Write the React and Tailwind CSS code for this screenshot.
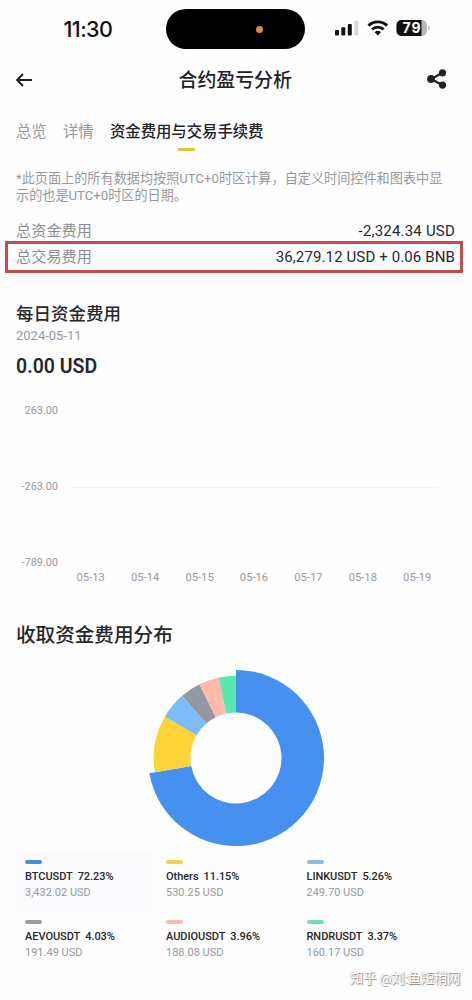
import React from "react";

const slices = [
	{ name: "BTCUSDT", pct: 72.23, value: "3,432.02 USD", color: "#4690f0", bar: "bg-[#4b8cd6]" },
	{ name: "Others", pct: 11.15, value: "530.25 USD", color: "#fdd438", bar: "bg-[#ecd24e]" },
	{ name: "LINKUSDT", pct: 5.26, value: "249.70 USD", color: "#7dbcf9", bar: "bg-[#8fb9e2]" },
	{ name: "AEVOUSDT", pct: 4.03, value: "191.49 USD", color: "#9299a3", bar: "bg-[#9b9da0]" },
	{ name: "AUDIOUSDT", pct: 3.96, value: "188.08 USD", color: "#fdbbab", bar: "bg-[#efbdb1]" },
	{ name: "RNDRUSDT", pct: 3.37, value: "160.17 USD", color: "#56e9b0", bar: "bg-[#74dcb4]" },
];

const days = ["05-13", "05-14", "05-15", "05-16", "05-17", "05-18", "05-19"];

function slicePath(start, end, outer, inner) {
	const point = (t, r) => {
		const a = t * 2 * Math.PI;
		return `${(88 + r * Math.sin(a)).toFixed(2)} ${(88 - r * Math.cos(a)).toFixed(2)}`;
	};
	const large = end - start > 0.5 ? 1 : 0;
	return `M${point(start, outer)}A${outer} ${outer} 0 ${large} 1 ${point(end, outer)}L${point(end, inner)}A${inner} ${inner} 0 ${large} 0 ${point(start, inner)}Z`;
}

function Donut() {
	let total = 0;
	return (
		<svg width="176" height="176" viewBox="0 0 176 176">
			{slices.map((s, i) => {
				const start = total;
				total += s.pct / 100;
				// The biggest slice sticks out a little
				return <path key={s.name} d={slicePath(start, Math.min(total, 1), i === 0 ? 88 : 82.3, 45.5)} fill={s.color} />;
			})}
		</svg>
	);
}

function StatusBar() {
	return (
		<div className="h-[58px] flex items-start">
			<div className="w-[166px] pl-[63.5px] pt-[15px] text-[21.5px] leading-7 font-medium font-['Inter',sans-serif] tracking-[-0.6px] text-[#111]">11:30</div>
			<div className="mt-[9px] w-[139px] h-10 rounded-full bg-black flex items-center pl-[90px]">
				<span className="size-[7px] rounded-full bg-[#d98f42]" />
			</div>
			<svg className="ml-[29px] mt-[18px]" width="100" height="20" viewBox="0 0 100 20">
				<g fill="#111">
					<rect x="1" y="12" width="4" height="5.5" rx="1" />
					<rect x="7.3" y="9.3" width="4" height="8.2" rx="1" />
					<rect x="13.8" y="6" width="4" height="11.5" rx="1" />
				</g>
				<rect x="20.3" y="2.7" width="4" height="14.8" rx="1" fill="#d8d8d8" />
				<g fill="none" stroke="#111" strokeWidth="2.9">
					<path d="M34.5 7.6a13.4 13.4 0 0 1 18.6 0" />
					<path d="M38 11.4a8.4 8.4 0 0 1 11.6 0" />
				</g>
				<path d="M40.6 14.2a4.7 4.7 0 0 1 6.4 0L43.8 17.6Z" fill="#111" />
				<rect x="62.5" y="2" width="30.5" height="16" rx="5" fill="#b8b8b8" />
				<path d="M67.5 2H87.5V18H67.5a5 5 0 0 1-5-5V7a5 5 0 0 1 5-5Z" fill="#111" />
				<path d="M94.3 7.3q2.5 2.7 0 5.4Z" fill="#aaa" />
				<text x="68.5" y="15.3" fontSize="14" fontWeight="700" fontFamily="Inter, sans-serif" fill="#fff" textLength="18">79</text>
			</svg>
		</div>
	);
}

function Header() {
	return (
		<div className="h-[44px] px-4 flex items-center text-[#202226]">
			<svg width="20" height="16" viewBox="0 0 20 16" fill="none" stroke="currentColor" strokeWidth="2">
				<path d="M16 8H1.5M7 2L1.2 8 7 14" />
			</svg>
			<h1 className="ml-[142.5px] mt-[2px] text-[18.9px] font-medium">合约盈亏分析</h1>
			<svg className="ml-auto mr-[9px] mb-0.5" width="20" height="20" viewBox="0 0 20 20" fill="currentColor">
				<path d="M15.3 3.8L4.5 10l10.8 6.2" fill="none" stroke="currentColor" strokeWidth="2.2" />
				<circle cx="15.5" cy="3.8" r="3.6" />
				<circle cx="4" cy="10" r="3.9" />
				<circle cx="15.5" cy="16.1" r="3.6" />
			</svg>
		</div>
	);
}

export default function App() {
	return (
		<div className="w-[472px] h-[1000px] overflow-hidden bg-[#fefefe] font-['Roboto','Noto_Sans_CJK_SC',sans-serif] text-[#26282c]">
			<StatusBar />
			<Header />

			{/* Tabs */}
			<div className="h-[66px] pt-[19px] pl-4 flex text-[15.35px] leading-[22px] text-[#97999d]">
				<span className="w-[47px]">总览</span>
				<span className="w-[47px]">详情</span>
				<div className="flex flex-col items-center text-[#202226]">
					<span className="font-medium">资金费用与交易手续费</span>
					<span className="mt-[5px] w-[17px] h-[3px] rounded-[1px] bg-[#e5c33c]" />
				</div>
			</div>

			<p className="h-[50px] pl-4 pt-0.5 text-[13.15px] leading-[17px] text-[#97999d] whitespace-nowrap">
				*此页面上的所有数据均按照UTC+0时区计算，自定义时间控件和图表中显
				<br />
				示的也是UTC+0时区的日期。
			</p>

			{/* Totals */}
			<div className="h-[23px] pl-4 pr-[17px] flex items-center justify-between text-[15.2px] leading-6">
				<span className="pt-0.5 text-[#8b8d92]">总资金费用</span>
				<span className="pt-0.5 text-[15px] tracking-[0.2px]">-2,324.34 USD</span>
			</div>
			<div className="ml-[5px] w-[458px] h-8 border-3 border-[#c34c4e] pl-2 pr-[5px] flex items-center justify-between text-[15.2px]">
				<span className="text-[#8b8d92]">总交易费用</span>
				<span className="text-[15px] tracking-[0.12px]">36,279.12 USD + 0.06 BNB</span>
			</div>

			{/* Daily funding fee */}
			<section className="pt-[28px] pl-4 h-[328px]">
				<h2 className="text-[17.5px] leading-[26px] font-medium">每日资金费用</h2>
				<p className="text-[13px] leading-[18px] text-[#97999d]">2024-05-11</p>
				<p className="mt-[9px] text-[19.5px] leading-[26px] font-semibold">0.00 USD</p>
				<div className="mt-[23px] flex text-[10.9px] text-[#97999d]">
					<div className="w-[42px] h-[168px] flex flex-col justify-between items-end leading-4">
						<span>263.00</span>
						<span>-263.00</span>
						<span>-789.00</span>
					</div>
					<div className="ml-[14px] w-[367px] h-[168px] flex items-center">
						<div className="w-full h-px bg-[#f5f5f6]" />
					</div>
				</div>
				<div className="ml-[47.5px] -mt-px w-[381px] flex text-[11.2px] leading-4 text-[#97999d]">
					{days.map((d) => (
						<span key={d} className="flex-1 text-center">{d}</span>
					))}
				</div>
			</section>

			{/* Distribution of received funding */}
			<section>
				<h2 className="pl-4 pt-[21px] text-[19.6px] leading-7 font-medium">收取资金费用分布</h2>
				<div className="mt-5 pl-[147.5px]">
					<Donut />
				</div>
				<div className="mt-[6px] pl-4 grid grid-cols-[141px_140.5px_140px]">
					{slices.map((s, i) => (
						<div key={s.name} className={`h-[59.5px] w-[136px] pt-2 pl-[9px] rounded-sm ${i === 0 ? "bg-[#fbfafd]" : ""}`}>
							<div className={`w-[17px] h-1 rounded-full ${s.bar}`} />
							<p className="mt-1 text-[11px] leading-[17px] font-medium tracking-[-0.05px] whitespace-nowrap">
								{s.name}
								<span className="ml-[5px]">{s.pct}%</span>
							</p>
							<p className="text-[11px] leading-[15px] text-[#97999d]">{s.value}</p>
						</div>
					))}
				</div>
			</section>

			<div className="-mt-[3px] pr-3 text-right text-[13.5px] leading-5 text-white tracking-[-0.3px] [text-shadow:1px_1px_1px_#888,-0.5px_-0.5px_0_#ccc]">知乎 @刘:鱼短稍网</div>
		</div>
	);
}
